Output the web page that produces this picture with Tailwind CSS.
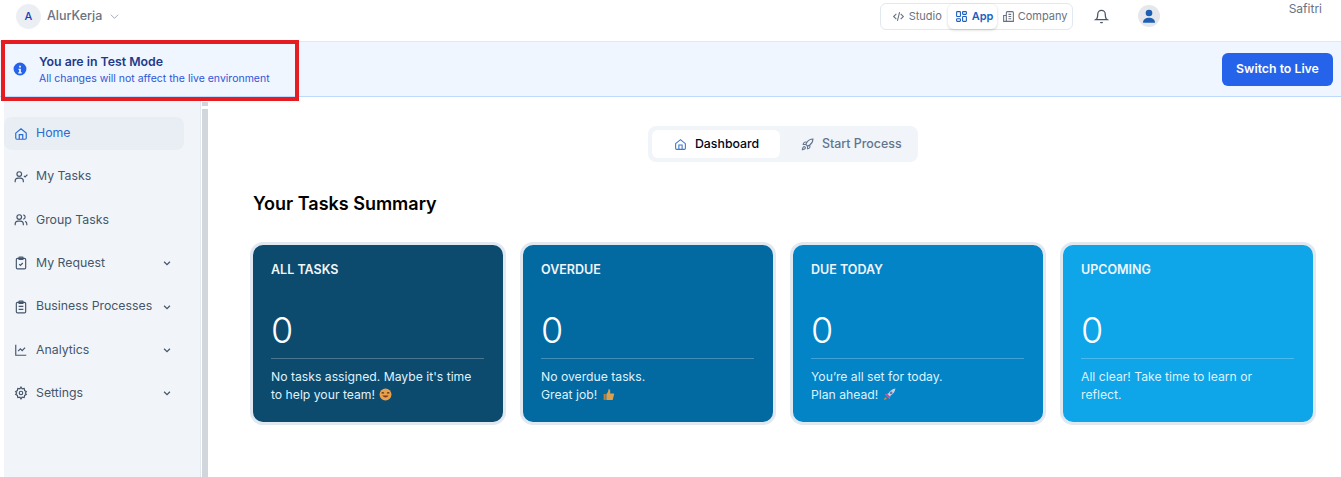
<!DOCTYPE html>
<html lang="en">
<head>
    <meta charset="UTF-8">
    <title>AlurKerja</title>
    <script src="https://cdn.jsdelivr.net/npm/@tailwindcss/browser@4"></script>
</head>
<body class="bg-white font-['Inter',sans-serif] overflow-hidden h-[477px]">
    <!-- top bar -->
    <header class="h-[42px] flex border-b border-slate-200 relative">
        <div class="flex items-start pl-4 pt-1">
            <span class="w-[25px] h-[25px] rounded-full bg-slate-200/70 flex items-center justify-center text-[11px] font-medium text-blue-800">A</span>
            <span class="ml-[6px] mt-[3px] text-[12.500px] leading-[17px] font-medium text-gray-500">AlurKerja</span>
            <svg class="ml-[7px] mt-[7px] w-[11px] h-[11px] text-gray-400" viewBox="0 0 24 24" fill="none" stroke="currentColor" stroke-width="2"><path d="m4 8 8 8 8-8"/></svg>
        </div>
        <div class="ml-auto flex items-start pr-[19px]">
            <div class="mt-[3px] h-[27px] w-[193px] flex items-center border border-slate-200 rounded-md text-[11px] text-gray-500">
                <span class="flex items-center gap-[4px] pl-[11px] w-[67px]">
                    <svg class="w-[13px] h-[13px]" viewBox="0 0 24 24" fill="none" stroke="currentColor" stroke-width="2"><path d="m8 7-5 5 5 5M16 7l5 5-5 5M14 4l-4 16"/></svg>
                    Studio
                </span>
                <span class="flex items-center gap-[4px] pl-[7px] w-[49px] h-[25px] bg-white rounded-md shadow-[0_1px_3px_rgba(0,0,0,0.18)] font-semibold text-[#1d5fc0]">
                    <svg class="w-[13px] h-[13px]" viewBox="0 0 24 24" fill="none" stroke="currentColor" stroke-width="2"><rect x="3" y="3" width="7" height="9" rx="1"/><rect x="14" y="3" width="7" height="5" rx="1"/><rect x="14" y="12" width="7" height="9" rx="1"/><rect x="3" y="16" width="7" height="5" rx="1"/></svg>
                    App
                </span>
                <span class="flex items-center gap-[3px] pl-[5px]">
                    <svg class="w-[13px] h-[13px]" viewBox="0 0 24 24" fill="none" stroke="currentColor" stroke-width="2"><path d="M8 21V5a2 2 0 0 1 2-2h9a2 2 0 0 1 2 2v16M3 21V10h5M2 21h20M12 8h5M12 12h5M12 16h5"/></svg>
                    Company
                </span>
            </div>
            <svg class="ml-[21px] mt-[9px] w-[15px] h-[15px] text-gray-600" viewBox="0 0 24 24" fill="none" stroke="currentColor" stroke-width="2"><path d="M6 8a6 6 0 0 1 12 0c0 7 3 9 3 9H3s3-2 3-9M10.3 21a2 2 0 0 0 3.4 0"/></svg>
            <span class="ml-[29px] mt-[5px] w-[22px] h-[22px] rounded-full bg-gray-200 flex items-center justify-center">
                <svg class="w-4 h-4 text-[#1d5fb0]" viewBox="0 0 24 24" fill="currentColor"><circle cx="12" cy="7.5" r="5"/><path d="M3 22c0-5 4-7.500 9-7.500s9 2.500 9 7.500z"/></svg>
            </span>
            <span class="ml-[129px] mt-[1px] text-xs leading-[15px] text-gray-500">Safitri</span>
        </div>
    </header>

    <!-- test mode banner -->
    <div class="h-[55px] bg-blue-50 border-b border-blue-200 flex items-center pl-[13px] pr-2 relative">
        <svg class="w-[14px] h-[14px] text-[#2563eb]" viewBox="0 0 24 24" fill="currentColor"><path fill-rule="evenodd" d="M12 1a11 11 0 1 0 0 22 11 11 0 0 0 0-22zm-1.500 5.500h3v3h-3zm-1 5h4v6h1.500v2h-6v-2h1.500v-4h-1z"/></svg>
        <div class="ml-3">
            <p class="text-[12.300px] leading-[18px] font-semibold text-[#1e3a8a]">You are in Test Mode</p>
            <p class="mt-[1px] text-[10.500px] leading-[14px] text-[#2f55d4]">All changes will not affect the live environment</p>
        </div>
        <button class="ml-auto w-[111px] h-[33px] bg-[#2563eb] rounded-md text-white text-[12.300px] font-semibold">Switch to Live</button>
        <!-- highlight rectangle -->
        <div class="absolute left-[1px] top-[-2px] w-[298px] h-[61px] border-4 border-[#e61c23]"></div>
    </div>

    <div class="flex h-[380px]">
        <!-- sidebar -->
        <aside class="ml-1 w-[197px] bg-slate-100 border-r border-slate-200 pt-5 text-[12.300px] whitespace-nowrap text-slate-600 shrink-0">
            <a class="flex items-center h-[33px] w-[180px] bg-slate-200/50 rounded-lg pl-[10px] gap-2 text-[#2b6cd0]">
                <svg class="w-[14px] h-[14px]" viewBox="0 0 24 24" fill="none" stroke="currentColor" stroke-width="2"><path d="M3 10.500 12 3l9 7.500V19a2 2 0 0 1-2 2H5a2 2 0 0 1-2-2zM9 21v-8h6v8"/></svg>
                Home
            </a>
            <nav class="mt-[5px] flex flex-col">
                <a class="flex items-center h-[43.300px] w-[180px] pl-[10px] gap-2">
                    <svg class="w-[14px] h-[14px]" viewBox="0 0 24 24" fill="none" stroke="currentColor" stroke-width="2"><circle cx="9" cy="7" r="4"/><path d="M2 21v-2a5 5 0 0 1 5-5h4a5 5 0 0 1 5 5v2M17 10l2 2 4-4"/></svg>
                    My Tasks
                </a>
                <a class="flex items-center h-[43.300px] w-[180px] pl-[10px] gap-2">
                    <svg class="w-[14px] h-[14px]" viewBox="0 0 24 24" fill="none" stroke="currentColor" stroke-width="2"><circle cx="9" cy="7" r="4"/><path d="M2 21v-2a5 5 0 0 1 5-5h4a5 5 0 0 1 5 5v2M16 3.100a4 4 0 0 1 0 7.800M19 14.200a5 5 0 0 1 3 4.800v2"/></svg>
                    Group Tasks
                </a>
                <a class="flex items-center h-[43.300px] w-[180px] pl-[10px] gap-2">
                    <svg class="w-[14px] h-[14px]" viewBox="0 0 24 24" fill="none" stroke="currentColor" stroke-width="2"><rect x="4" y="4" width="16" height="18" rx="2"/><rect x="8.500" y="2" width="7" height="4" rx="1"/><path d="m9 14 2 2 4-4"/></svg>
                    My Request
                    <svg class="ml-auto mr-3 w-[10px] h-[10px]" viewBox="0 0 24 24" fill="none" stroke="currentColor" stroke-width="3"><path d="m5 9 7 7 7-7"/></svg>
                </a>
                <a class="flex items-center h-[43.300px] w-[180px] pl-[10px] gap-2">
                    <svg class="w-[14px] h-[14px]" viewBox="0 0 24 24" fill="none" stroke="currentColor" stroke-width="2"><rect x="4" y="4" width="16" height="18" rx="2"/><rect x="8.500" y="2" width="7" height="4" rx="1"/><path d="M8 11h8M8 16h8"/></svg>
                    Business Processes
                    <svg class="ml-auto mr-3 w-[10px] h-[10px]" viewBox="0 0 24 24" fill="none" stroke="currentColor" stroke-width="3"><path d="m5 9 7 7 7-7"/></svg>
                </a>
                <a class="flex items-center h-[43.300px] w-[180px] pl-[10px] gap-2">
                    <svg class="w-[14px] h-[14px]" viewBox="0 0 24 24" fill="none" stroke="currentColor" stroke-width="2"><path d="M3 3v18h18M7 14l4-4 3 3 5-5"/></svg>
                    Analytics
                    <svg class="ml-auto mr-3 w-[10px] h-[10px]" viewBox="0 0 24 24" fill="none" stroke="currentColor" stroke-width="3"><path d="m5 9 7 7 7-7"/></svg>
                </a>
                <a class="flex items-center h-[43.300px] w-[180px] pl-[10px] gap-2">
                    <svg class="w-[14px] h-[14px]" viewBox="0 0 24 24" fill="none" stroke="currentColor" stroke-width="2"><circle cx="12" cy="12" r="3"/><path d="M12 2l2 3 3.500-.700.700 3.500 3 2-1.700 2.200 1.700 2.200-3 2-.700 3.500-3.500-.700-2 3-2-3-3.500.700-.700-3.500-3-2 1.700-2.200L2.800 9.800l3-2 .700-3.500L10 5z"/></svg>
                    Settings
                    <svg class="ml-auto mr-3 w-[10px] h-[10px]" viewBox="0 0 24 24" fill="none" stroke="currentColor" stroke-width="3"><path d="m5 9 7 7 7-7"/></svg>
                </a>
            </nav>
        </aside>
        <!-- scrollbar -->
        <div class="w-[7px] bg-white shrink-0 pt-[5px] flex flex-col gap-[3px]">
            <div class="ml-[1px] w-[6px] h-[4px] bg-gray-300"></div>
            <div class="ml-[1px] w-[6px] flex-1 bg-gray-300"></div>
        </div>

        <!-- main content -->
        <main class="flex-1 pl-[45px] pr-[33px] pt-[29px]">
            <div class="flex justify-center">
                <div class="w-[270px] h-[36px] bg-slate-100 rounded-lg p-1 flex text-[12.300px]">
                    <span class="w-[128px] bg-white rounded-md flex items-center pl-[22px] gap-2 font-medium text-slate-950">
                        <svg class="w-[13px] h-[13px] text-[#3f7ac8]" viewBox="0 0 24 24" fill="none" stroke="currentColor" stroke-width="2"><path d="M3 10.500 12 3l9 7.500V19a2 2 0 0 1-2 2H5a2 2 0 0 1-2-2zM9 21v-8h6v8"/></svg>
                        Dashboard
                    </span>
                    <span class="flex items-center pl-[21px] gap-2 text-[12.400px] font-medium text-slate-500">
                        <svg class="w-[13px] h-[13px]" viewBox="0 0 24 24" fill="none" stroke="currentColor" stroke-width="2"><path d="M4.500 16.500c-1.500 1.300-2 5-2 5s3.700-.500 5-2c.700-.800.700-2.100-.100-2.900a2.200 2.200 0 0 0-2.900-.100zM12 15l-3-3a22 22 0 0 1 2-4A13 13 0 0 1 22 2c0 2.700-.800 7.500-6 11a22 22 0 0 1-4 2zM9 12H4s.600-3 2-4c1.600-1.100 5 0 5 0M12 15v5s3-.600 4-2c1.100-1.600 0-5 0-5"/></svg>
                        Start Process
                    </span>
                </div>
            </div>

            <h2 class="mt-[30px] text-lg leading-[24px] font-semibold text-black">Your Tasks Summary</h2>

            <div class="mt-[29px] grid grid-cols-4 gap-5 w-[1060px]">
                <div class="h-[177px] rounded-[10px] ring-[3px] ring-slate-200 bg-[#0c4a6e] pl-[18px] pr-[19px] pt-4 text-white">
                    <p class="text-[12.500px] leading-[18px] font-semibold text-slate-100">ALL TASKS</p>
                    <p class="mt-[31px] text-[36px] leading-[40px] font-light">0</p>
                    <div class="mt-2 border-t border-white/25 pt-[9px] text-[12.200px] leading-[18px] text-sky-100">
                        No tasks assigned. Maybe it's time<br>to help your team!
                        <svg class="inline w-[13px] h-[13px] align-[-2px] ml-[1px]" viewBox="0 0 24 24"><circle cx="12" cy="12" r="11" fill="#e8a04c"/><path d="M5 10q2-3 4 0M15 10q2-3 4 0" fill="none" stroke="#5b3a1e" stroke-width="2"/><path d="M6 14q6 7 12 0z" fill="#7a3b1e"/></svg>
                    </div>
                </div>
                <div class="h-[177px] rounded-[10px] ring-[3px] ring-slate-200 bg-[#0369a1] pl-[18px] pr-[19px] pt-4 text-white">
                    <p class="text-[12.500px] leading-[18px] font-semibold text-slate-100">OVERDUE</p>
                    <p class="mt-[31px] text-[36px] leading-[40px] font-light">0</p>
                    <div class="mt-2 border-t border-white/25 pt-[9px] text-[12.200px] leading-[18px] text-sky-100">
                        No overdue tasks.<br>Great job!
                        <svg class="inline w-[13px] h-[13px] align-[-2px] ml-[1px]" viewBox="0 0 24 24"><path d="M3 11h4v11H3z" fill="#b8823a"/><path d="M8 11c3-2 4-6 4-9 3 0 4 3 3 8h6c1 0 2 1 1 3l-2 8c0 1-1 1-2 1H8z" fill="#d9a04e"/></svg>
                    </div>
                </div>
                <div class="h-[177px] rounded-[10px] ring-[3px] ring-slate-200 bg-[#0284c7] pl-[18px] pr-[19px] pt-4 text-white">
                    <p class="text-[12.500px] leading-[18px] font-semibold text-slate-100">DUE TODAY</p>
                    <p class="mt-[31px] text-[36px] leading-[40px] font-light">0</p>
                    <div class="mt-2 border-t border-white/25 pt-[9px] text-[12.200px] leading-[18px] text-sky-100">
                        You’re all set for today.<br>Plan ahead!
                        <svg class="inline w-[13px] h-[13px] align-[-2px] ml-[1px]" viewBox="0 0 24 24"><path d="M8 16 4 12l6-2c3-5 7-8 13-9-1 6-4 10-9 13l-2 6z" fill="#c9cfe0"/><path d="M4 12l4-1 5 5-1 4z" fill="#c23f8c"/><path d="M2 22c0-3 1-4 3-5l2 2c-1 2-2 3-5 3z" fill="#e0803a"/><circle cx="15" cy="9" r="2.500" fill="#7f6bb0"/></svg>
                    </div>
                </div>
                <div class="h-[177px] rounded-[10px] ring-[3px] ring-slate-200 bg-[#0ea5e9] pl-[18px] pr-[19px] pt-4 text-white">
                    <p class="text-[12.500px] leading-[18px] font-semibold text-slate-100">UPCOMING</p>
                    <p class="mt-[31px] text-[36px] leading-[40px] font-light">0</p>
                    <div class="mt-2 border-t border-white/25 pt-[9px] text-[12.200px] leading-[18px] text-sky-100">
                        All clear! Take time to learn or<br>reflect.
                    </div>
                </div>
            </div>
        </main>
    </div>
</body>
</html>
